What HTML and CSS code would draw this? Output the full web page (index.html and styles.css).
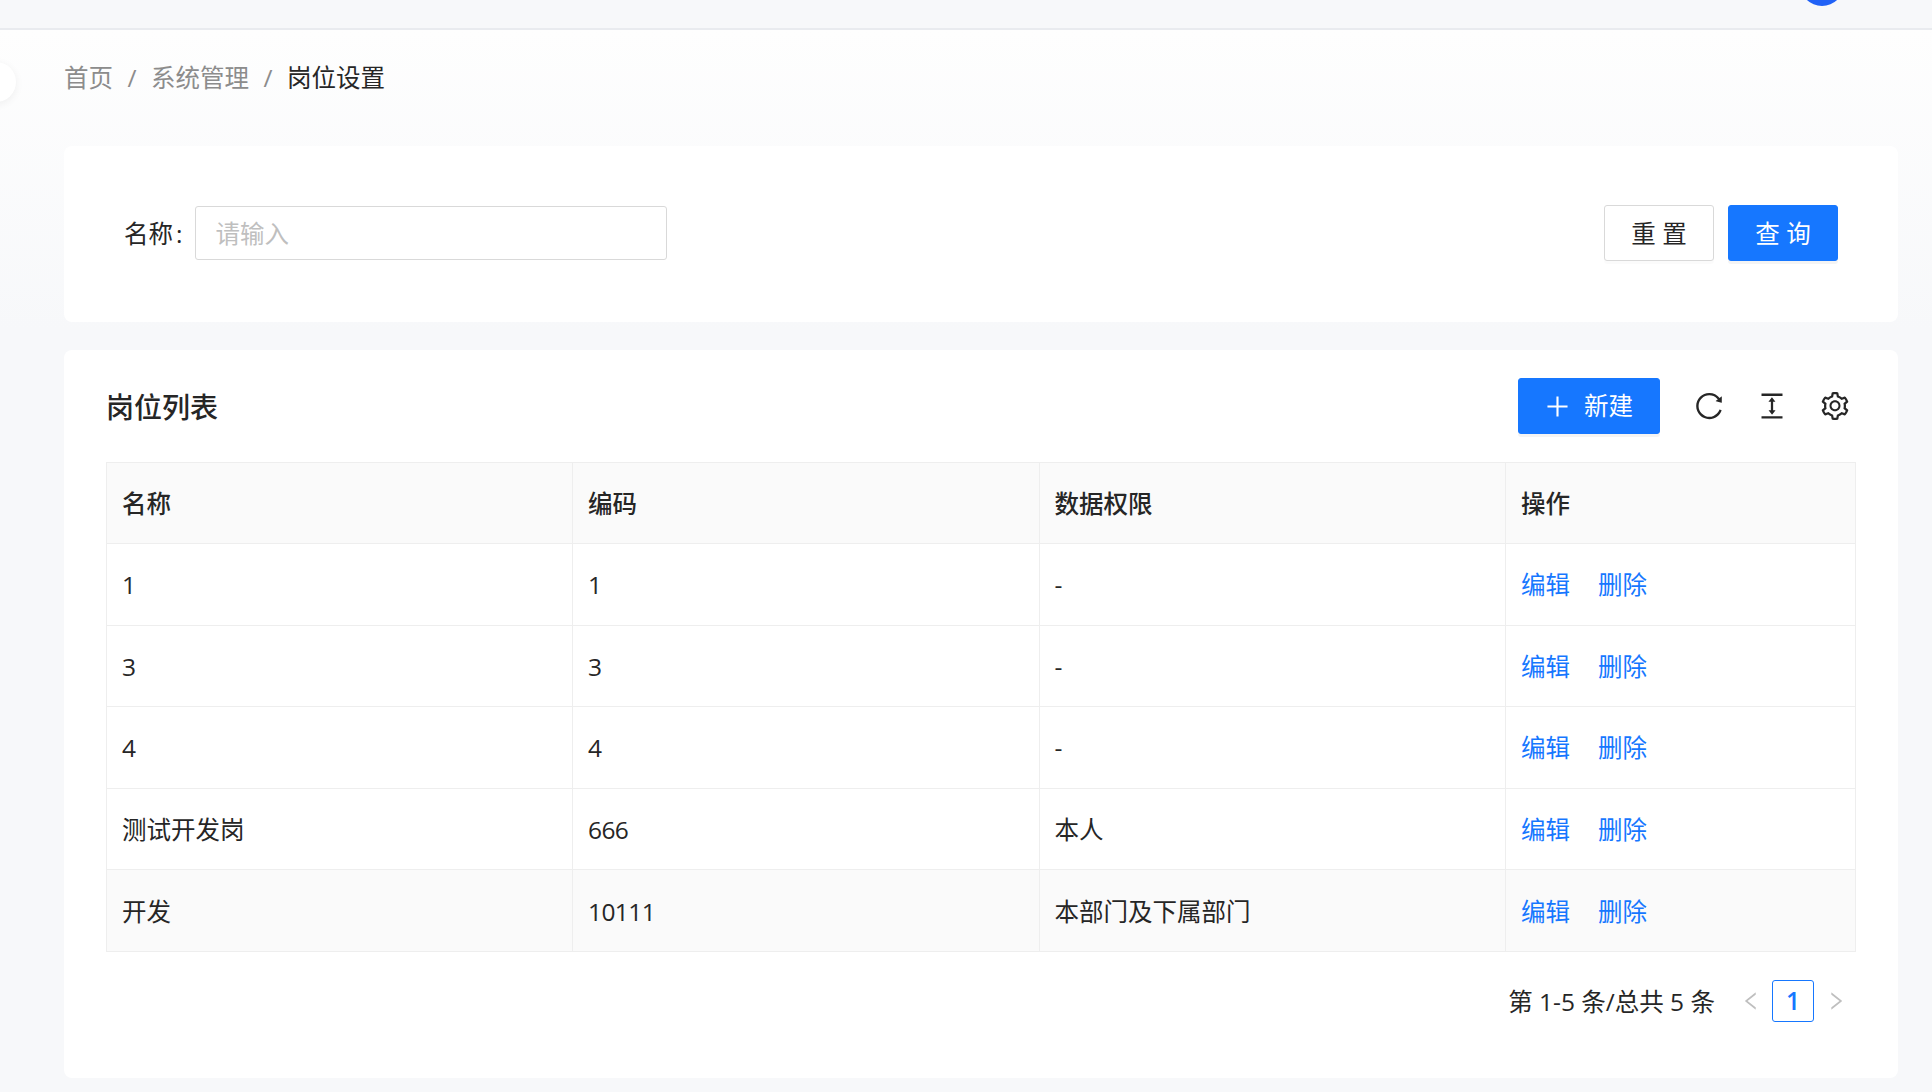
FILE: index.html
```html
<!DOCTYPE html>
<html lang="zh-CN">
<head>
<meta charset="utf-8">
<title>岗位设置</title>
<link rel="stylesheet" href="styles.css">
</head>
<body>
<header class="topbar"><span class="avatar"></span></header>
<main class="content">
  <span class="collapse-tab"></span>
  <nav class="breadcrumb">
    <a>首页</a><span class="sep">/</span><a>系统管理</a><span class="sep">/</span><span class="current">岗位设置</span>
  </nav>
  <section class="card search-card">
    <label class="field-label">名称<span class="colon">:</span></label>
    <input class="field-input" placeholder="请输入">
    <div class="search-actions">
      <button class="btn">重 置</button>
      <button class="btn btn-primary">查 询</button>
    </div>
  </section>
  <section class="card table-card">
    <div class="toolbar">
      <h2 class="title">岗位列表</h2>
      <button class="btn btn-primary btn-new">
        <svg class="plus" viewBox="64 64 896 896" fill="currentColor"><path d="M482 152h60q8 0 8 8v704q0 8-8 8h-60q-8 0-8-8V160q0-8 8-8z"/><path d="M192 474h672q8 0 8 8v60q0 8-8 8H160q-8 0-8-8v-60q0-8 8-8z"/></svg>
        <span>新建</span>
      </button>
      <div class="tools">
        <svg class="tool" viewBox="64 64 896 896" fill="currentColor"><path d="M909.1 209.3l-56.4 44.1C775.8 155.1 656.2 92 521.9 92 290 92 102.3 279.5 102 511.5 101.7 743.7 289.8 932 521.9 932c181.3 0 335.8-115 394.6-276.1 1.5-4.2-.7-8.9-4.9-10.3l-56.7-19.5a8 8 0 0 0-10.1 4.8c-1.8 5-3.8 10-5.9 14.9-17.3 41-42.1 77.8-73.7 109.4A344.77 344.77 0 0 1 655.9 829c-42.3 17.9-87.4 27-133.8 27-46.5 0-91.5-9.1-133.8-27A341.5 341.5 0 0 1 279 755.2a342.16 342.16 0 0 1-73.7-109.4c-17.9-42.4-27-87.4-27-133.9s9.1-91.5 27-133.9c17.3-41 42.1-77.8 73.7-109.4 31.6-31.6 68.4-56.4 109.3-73.8 42.3-17.9 87.4-27 133.8-27 46.5 0 91.5 9.1 133.8 27a341.5 341.5 0 0 1 109.3 73.8c9.9 9.9 19.2 20.4 27.8 31.4l-60.2 47a8 8 0 0 0 3 14.1l175.6 43c5 1.2 9.9-2.6 9.9-7.7l.8-180.9c-.1-6.6-7.8-10.3-13-6.2z"/></svg>
        <svg class="tool" viewBox="64 64 896 896" fill="currentColor"><path d="M840 836H184c-4.4 0-8 3.6-8 8v60c0 4.4 3.6 8 8 8h656c4.4 0 8-3.6 8-8v-60c0-4.4-3.6-8-8-8zm0-724H184c-4.4 0-8 3.6-8 8v60c0 4.4 3.6 8 8 8h656c4.4 0 8-3.6 8-8v-60c0-4.4-3.6-8-8-8zM610.8 378c6 0 9.4-7 5.7-11.7L515.7 238.7a7.14 7.14 0 0 0-11.3 0L403.6 366.3a7.23 7.23 0 0 0 5.7 11.7H476v268h-62.8c-6 0-9.4 7-5.7 11.7l100.8 127.5c2.9 3.7 8.5 3.7 11.3 0l100.8-127.5c3.7-4.7.4-11.7-5.7-11.7H548V378h62.8z"/></svg>
        <svg class="tool" viewBox="64 64 896 896" fill="currentColor"><path d="M924.8 625.7l-65.5-56c3.1-19 4.7-38.4 4.7-57.8s-1.6-38.8-4.7-57.8l65.5-56a32.03 32.03 0 0 0 9.3-35.2l-.9-2.6a443.74 443.74 0 0 0-79.7-137.9l-1.8-2.1a32.12 32.12 0 0 0-35.1-9.5l-81.3 28.9c-30-24.6-63.5-44-99.7-57.6l-15.7-85a32.05 32.05 0 0 0-25.8-25.7l-2.7-.5c-52.1-9.4-106.9-9.4-159 0l-2.7.5a32.05 32.05 0 0 0-25.8 25.7l-15.8 85.4a351.86 351.86 0 0 0-99 57.4l-81.9-29.1a32 32 0 0 0-35.1 9.5l-1.8 2.1a446.02 446.02 0 0 0-79.7 137.9l-.9 2.6c-4.5 12.5-.8 26.5 9.3 35.2l66.3 56.6c-3.1 18.8-4.6 38-4.6 57.1 0 19.2 1.5 38.4 4.6 57.1L99 625.5a32.03 32.03 0 0 0-9.3 35.2l.9 2.6c18.1 50.4 44.9 96.9 79.7 137.9l1.8 2.1a32.12 32.12 0 0 0 35.1 9.5l81.9-29.1c29.8 24.5 63.1 43.9 99 57.4l15.8 85.4a32.05 32.05 0 0 0 25.8 25.7l2.7.5a449.4 449.4 0 0 0 159 0l2.7-.5a32.05 32.05 0 0 0 25.8-25.7l15.7-85a350 350 0 0 0 99.7-57.6l81.3 28.9a32 32 0 0 0 35.1-9.5l1.8-2.1c34.8-41.1 61.6-87.5 79.7-137.9l.9-2.6c4.5-12.3.8-26.3-9.3-35zM788.3 465.9c2.5 15.1 3.8 30.6 3.8 46.1s-1.3 31-3.8 46.1l-6.6 40.1 74.7 63.9a370.03 370.03 0 0 1-42.6 73.6L721 702.8l-31.4 25.8c-23.9 19.6-50.5 35-79.3 45.8l-38.1 14.3-17.9 97a377.5 377.5 0 0 1-85 0l-17.9-97.2-37.8-14.5c-28.5-10.8-55-26.2-78.7-45.7l-31.4-25.9-93.4 33.2c-17-22.9-31.2-47.6-42.6-73.6l75.5-64.5-6.5-40c-2.4-14.9-3.7-30.3-3.7-45.5 0-15.3 1.2-30.6 3.7-45.5l6.5-40-75.5-64.5c11.3-26.1 25.6-50.7 42.6-73.6l93.4 33.2 31.4-25.9c23.7-19.5 50.2-34.9 78.7-45.7l37.9-14.3 17.9-97.2c28.1-3.2 56.8-3.2 85 0l17.9 97 38.1 14.3c28.7 10.8 55.4 26.2 79.3 45.8l31.4 25.8 92.8-32.9c17 22.9 31.2 47.6 42.6 73.6L781.8 426l6.5 39.9zM512 326c-97.2 0-176 78.8-176 176s78.8 176 176 176 176-78.8 176-176-78.8-176-176-176zm79.2 255.2A111.6 111.6 0 0 1 512 614c-29.9 0-58-11.7-79.2-32.8A111.6 111.6 0 0 1 400 502c0-29.9 11.7-58 32.8-79.2C454 401.6 482.1 390 512 390c29.9 0 58 11.6 79.2 32.8A111.6 111.6 0 0 1 624 502c0 29.9-11.7 58-32.8 79.2z"/></svg>
      </div>
    </div>
    <table class="grid">
      <colgroup><col class="col-a"><col class="col-b"><col class="col-c"><col class="col-d"></colgroup>
      <thead>
        <tr><th>名称</th><th>编码</th><th>数据权限</th><th>操作</th></tr>
      </thead>
      <tbody>
        <tr><td class="num">1</td><td class="num">1</td><td>-</td><td><a class="link">编辑</a><a class="link">删除</a></td></tr>
        <tr><td class="num">3</td><td class="num">3</td><td>-</td><td><a class="link">编辑</a><a class="link">删除</a></td></tr>
        <tr><td class="num">4</td><td class="num">4</td><td>-</td><td><a class="link">编辑</a><a class="link">删除</a></td></tr>
        <tr><td>测试开发岗</td><td class="num">666</td><td>本人</td><td><a class="link">编辑</a><a class="link">删除</a></td></tr>
        <tr class="hovered"><td>开发</td><td class="num">10111</td><td>本部门及下属部门</td><td><a class="link">编辑</a><a class="link">删除</a></td></tr>
      </tbody>
    </table>
    <div class="pager">
      <span class="total">第 1-5 条/总共 5 条</span>
      <svg class="arrow" viewBox="64 64 896 896" fill="currentColor"><path d="M724 218.3V141c0-6.7-7.7-10.4-12.9-6.3L260.3 486.8a31.86 31.86 0 0 0 0 50.3l450.8 352.1c5.3 4.1 12.9.4 12.9-6.3v-77.3c0-4.9-2.3-9.6-6.1-12.6l-360-281 360-281.1c3.8-3 6.1-7.7 6.1-12.6z"/></svg>
      <span class="page">1</span>
      <svg class="arrow" viewBox="64 64 896 896" fill="currentColor"><path d="M765.7 486.8L314.9 134.7A7.97 7.97 0 0 0 302 141v77.3c0 4.9 2.3 9.6 6.1 12.6l360 281.1-360 281.1c-3.9 3-6.1 7.7-6.1 12.6V883c0 6.7 7.7 10.4 12.9 6.3l450.8-352.1a31.96 31.96 0 0 0 0-50.4z"/></svg>
    </div>
  </section>
</main>
</body>
</html>
```
FILE: styles.css
```css
* { box-sizing: border-box; }
html, body { margin: 0; height: 100%; overflow: hidden; }
body {
  background: #f7f8fa;
  color: #262626;
  font-family: "Open Sans", "Noto Sans CJK SC", sans-serif;
  font-size: 24.5px;
  line-height: 36px;
}
.topbar {
  position: relative;
  height: 30px;
  background: #f7f8fa;
  border-bottom: 2px solid #e9ebef;
  overflow: hidden;
}
.avatar {
  position: absolute;
  left: 1800px;
  top: -38px;
  width: 44px;
  height: 44px;
  border-radius: 50%;
  background: #2162f6;
}
.content {
  position: relative;
  height: 1062px;
  padding: 30px 34px 0 64px;
  background: linear-gradient(180deg, #fefefe 0, #f7f8fa 300px);
}
.collapse-tab {
  position: absolute;
  left: -24px;
  top: 32px;
  width: 40px;
  height: 40px;
  border-radius: 50%;
  background: #fff;
  box-shadow: 0 2px 8px rgba(0, 0, 0, .06);
}
.breadcrumb { display: flex; height: 36px; color: #8c8c8c; }
.sep { margin: 0 14.5px; }
.current { color: #262626; }
.card { background: #fff; border-radius: 8px; }
.search-card {
  display: flex;
  align-items: center;
  height: 176px;
  margin-top: 50px;
  padding: 0 60px 2px 60px;
}
.field-label { width: 70.5px; flex: none; padding-top: 2px; }
.colon { margin-left: 3px; }
.field-input {
  width: 472px;
  height: 54px;
  padding: 0 20px;
  border: 1px solid #d9d9d9;
  border-radius: 3px;
  outline: 0;
  font: inherit;
  color: inherit;
}
.field-input::placeholder { color: #bfbfbf; }
.search-actions { display: flex; gap: 14px; margin-left: auto; }
.search-actions .btn { padding-top: 2px; }
.btn {
  width: 110px;
  height: 56px;
  padding: 0;
  background: #fff;
  border: 1px solid #d9d9d9;
  border-radius: 3px;
  box-shadow: 0 3px 0 rgba(0, 0, 0, .016);
  color: #262626;
  font: inherit;
}
.btn-primary { background: #1677ff; border-color: #1677ff; color: #fff; box-shadow: 0 3px 0 rgba(0, 0, 0, .045); }
.table-card {
  height: 728px;
  margin-top: 28px;
  padding: 28px 42px 0;
}
.toolbar { display: flex; align-items: center; height: 56px; }
.title { margin: 1px 0 0; font-size: 28px; font-weight: 500; }
.btn-new {
  display: flex;
  align-items: center;
  justify-content: center;
  gap: 14px;
  width: 142px;
  margin-left: auto;
}
.plus { width: 25px; height: 25px; }
.tools { display: flex; gap: 35px; margin: 0 7px 0 35px; }
.tool { width: 28px; height: 28px; display: block; }
.grid {
  width: 1749px;
  margin-top: 28px;
  table-layout: fixed;
  border-collapse: collapse;
}
.col-a { width: 466px; }
.col-b, .col-c { width: 466.5px; }
.col-d { width: 350px; }
.grid th, .grid td {
  padding: 2px 15px 0;
  border: 1px solid #eeeeee;
  text-align: left;
  font-weight: 400;
}
.grid th { height: 81px; background: #fafafa; font-weight: 500; }
.grid td { height: 81.6px; }
.grid .num { letter-spacing: -.6px; }
.hovered td { background: #fafafa; }
.link { color: #1677ff; margin-right: 28px; }
.pager {
  display: flex;
  align-items: center;
  justify-content: flex-end;
  height: 42px;
  margin-top: 28px;
  padding-right: 10px;
}
.arrow { width: 20px; height: 20px; color: #bfbfbf; }
.total { margin-right: 26px; padding-top: 2px; }
.page {
  width: 42px;
  height: 42px;
  margin: 0 12px 0 11px;
  border: 1px solid #1677ff;
  border-radius: 3px;
  color: #1677ff;
  font-weight: 600;
  line-height: 40px;
  text-align: center;
}
```
